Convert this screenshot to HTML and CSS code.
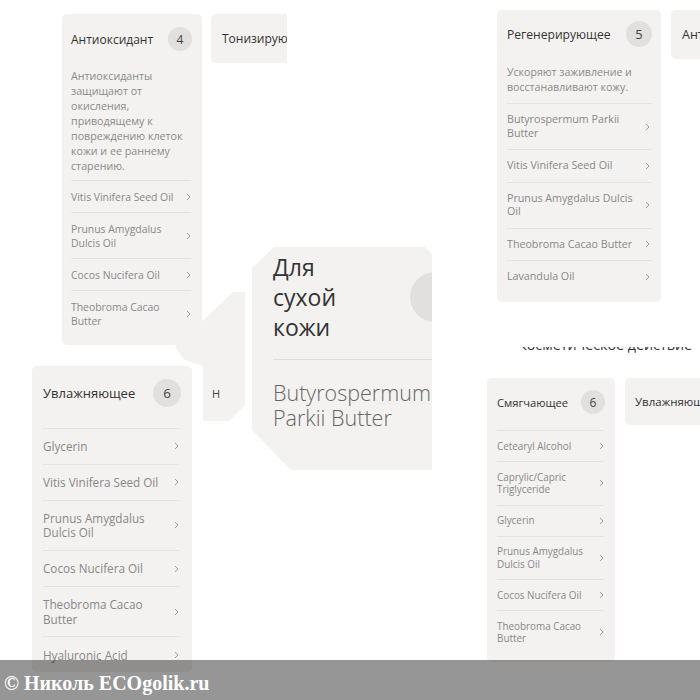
FILE: index.html
```html
<!DOCTYPE html>
<html lang="ru">
<head>
    <meta charset="UTF-8">
    <meta name="viewport" content="width=device-width, initial-scale=1.0">
    <title>Косметическое действие</title>
    <link rel="stylesheet" href="styles.css">
</head>
<body>
    <div class="collage">

        <!-- top left fragment -->
        <section class="piece piece-a">
            <div class="card">
                <div class="card-head">
                    <span class="card-title">Антиоксидант</span>
                    <span class="badge">4</span>
                </div>
                <p class="card-desc">Антиоксиданты<br>защищают от<br>окисления,<br>приводящему к<br>повреждению клеток<br>кожи и ее раннему<br>старению.</p>
                <ul class="list">
                    <li><span>Vitis Vinifera Seed Oil</span><svg viewBox="0 0 5 8"><path d="M1 1l3 3-3 3"/></svg></li>
                    <li><span>Prunus Amygdalus<br>Dulcis Oil</span><svg viewBox="0 0 5 8"><path d="M1 1l3 3-3 3"/></svg></li>
                    <li><span>Cocos Nucifera Oil</span><svg viewBox="0 0 5 8"><path d="M1 1l3 3-3 3"/></svg></li>
                    <li><span>Theobroma Cacao<br>Butter</span><svg viewBox="0 0 5 8"><path d="M1 1l3 3-3 3"/></svg></li>
                </ul>
            </div>
            <div class="tab">Тонизирующее</div>
        </section>

        <!-- top right fragment -->
        <section class="piece piece-b">
            <div class="card">
                <div class="card-head">
                    <span class="card-title">Регенерирующее</span>
                    <span class="badge">5</span>
                </div>
                <p class="card-desc">Ускоряют заживление и<br>восстанавливают кожу.</p>
                <ul class="list">
                    <li><span>Butyrospermum Parkii<br>Butter</span><svg viewBox="0 0 5 8"><path d="M1 1l3 3-3 3"/></svg></li>
                    <li><span>Vitis Vinifera Seed Oil</span><svg viewBox="0 0 5 8"><path d="M1 1l3 3-3 3"/></svg></li>
                    <li><span>Prunus Amygdalus Dulcis<br>Oil</span><svg viewBox="0 0 5 8"><path d="M1 1l3 3-3 3"/></svg></li>
                    <li><span>Theobroma Cacao Butter</span><svg viewBox="0 0 5 8"><path d="M1 1l3 3-3 3"/></svg></li>
                    <li><span>Lavandula Oil</span><svg viewBox="0 0 5 8"><path d="M1 1l3 3-3 3"/></svg></li>
                </ul>
            </div>
            <div class="tab">Антиоксидант</div>
        </section>

        <!-- ghost shape next to the big tile -->
        <div class="ghost">
            <span class="ghost-letter">Н</span>
        </div>

        <!-- bottom left fragment -->
        <section class="piece piece-c">
            <div class="card">
                <div class="card-head">
                    <span class="card-title">Увлажняющее</span>
                    <span class="badge">6</span>
                </div>
                <ul class="list">
                    <li><span>Glycerin</span><svg viewBox="0 0 5 8"><path d="M1 1l3 3-3 3"/></svg></li>
                    <li><span>Vitis Vinifera Seed Oil</span><svg viewBox="0 0 5 8"><path d="M1 1l3 3-3 3"/></svg></li>
                    <li><span>Prunus Amygdalus<br>Dulcis Oil</span><svg viewBox="0 0 5 8"><path d="M1 1l3 3-3 3"/></svg></li>
                    <li><span>Cocos Nucifera Oil</span><svg viewBox="0 0 5 8"><path d="M1 1l3 3-3 3"/></svg></li>
                    <li><span>Theobroma Cacao<br>Butter</span><svg viewBox="0 0 5 8"><path d="M1 1l3 3-3 3"/></svg></li>
                    <li><span>Hyaluronic Acid</span><svg viewBox="0 0 5 8"><path d="M1 1l3 3-3 3"/></svg></li>
                </ul>
            </div>
        </section>

        <!-- bottom right fragment -->
        <section class="piece piece-d">
            <div class="section-title"><h3>Косметическое действие</h3></div>
            <div class="cards">
                <div class="card">
                    <div class="card-head">
                        <span class="card-title">Смягчающее</span>
                        <span class="badge">6</span>
                    </div>
                    <ul class="list">
                        <li><span>Cetearyl Alcohol</span><svg viewBox="0 0 5 8"><path d="M1 1l3 3-3 3"/></svg></li>
                        <li><span>Caprylic/Capric<br>Triglyceride</span><svg viewBox="0 0 5 8"><path d="M1 1l3 3-3 3"/></svg></li>
                        <li><span>Glycerin</span><svg viewBox="0 0 5 8"><path d="M1 1l3 3-3 3"/></svg></li>
                        <li><span>Prunus Amygdalus<br>Dulcis Oil</span><svg viewBox="0 0 5 8"><path d="M1 1l3 3-3 3"/></svg></li>
                        <li><span>Cocos Nucifera Oil</span><svg viewBox="0 0 5 8"><path d="M1 1l3 3-3 3"/></svg></li>
                        <li><span>Theobroma Cacao<br>Butter</span><svg viewBox="0 0 5 8"><path d="M1 1l3 3-3 3"/></svg></li>
                    </ul>
                </div>
                <div class="tab">Увлажняющее</div>
            </div>
        </section>

        <!-- big tile in the middle -->
        <div class="tile">
            <div class="tile-inner">
                <div class="tile-head">
                    <h2>Для<br>сухой<br>кожи</h2>
                    <span class="tile-circle"></span>
                </div>
                <p class="tile-name">Butyrospermum<br>Parkii Butter</p>
            </div>
        </div>

        <div class="watermark">© Николь ECOgolik.ru</div>
    </div>
</body>
</html>
```

FILE: styles.css
```css
* {
    box-sizing: border-box;
}
body {
    margin: 0;
    background-color: #fff;
    font-family: "Open Sans", "Noto Sans", sans-serif;
}
.collage {
    position: relative;
    width: 700px;
    height: 700px;
    overflow: hidden;
    background-color: #fff;
}

/* pieces of the collage */
.piece {
    position: absolute;
    display: flex;
    align-items: flex-start;
    overflow: hidden;
}
.piece-a { left: 62px; top: 14px; width: 225px; height: 340px; gap: 9px; }
.piece-b { left: 497px; top: 10px; width: 203px; height: 300px; gap: 10px; }
.piece-c { left: 32px; top: 366px; width: 160px; height: 334px; }
.piece-d { left: 487px; top: 346px; width: 213px; height: 320px; flex-direction: column; }

.card {
    flex: none;
    background-color: #f3f2f0;
    border-radius: 5px;
}
.card-head {
    display: flex;
    justify-content: space-between;
    align-items: center;
}
.card-title {
    font-weight: 500;
    color: #333;
    white-space: nowrap;
}
.badge {
    display: flex;
    justify-content: center;
    align-items: center;
    border-radius: 50%;
    background-color: #e1e0de;
    color: #444;
}
.card-desc {
    margin: 0;
    color: #8a8a8a;
    border-bottom: 1px solid #e4e3e1;
    white-space: nowrap;
}
.list {
    list-style: none;
    margin: 0;
    padding: 0;
    color: #888;
}
.list li {
    display: flex;
    justify-content: space-between;
    align-items: center;
    border-bottom: 1px solid #e4e3e1;
    white-space: nowrap;
}
.list li:last-child {
    border-bottom: none;
}
.list svg {
    flex: none;
    width: 5px;
    height: 8px;
    fill: none;
    stroke: #9c9c9c;
    stroke-width: 1;
}
.tab {
    flex: none;
    display: flex;
    align-items: center;
    background-color: #f3f2f0;
    border-radius: 5px;
    font-weight: 500;
    color: #333;
    white-space: nowrap;
}

/* top left */
.piece-a .card { width: 140px; padding: 13px 11px 9px 9px; }
.piece-a .card-title { font-size: 12px; }
.piece-a .badge { width: 24px; height: 24px; font-size: 12px; margin-right: -1px; }
.piece-a .card-desc { margin-top: 18px; font-size: 10.7px; line-height: 15px; padding-bottom: 6px; }
.piece-a .list { font-size: 10.4px; line-height: 14px; }
.piece-a .list li { padding: 8.5px 0; }
.piece-a .tab { height: 49px; padding: 0 11px; font-size: 12px; }

/* top right */
.piece-b .card { width: 164px; padding: 11px 9px 9.5px 10px; }
.piece-b .card-title { font-size: 12.1px; }
.piece-b .badge { width: 26px; height: 26px; font-size: 13px; }
.piece-b .card-desc { margin-top: 18px; font-size: 10.6px; line-height: 15px; padding-bottom: 8px; }
.piece-b .list { font-size: 10.7px; line-height: 13.5px; }
.piece-b .list li { padding: 9px 0; }
.piece-b .list svg { margin-right: 2px; }
.piece-b .tab { height: 49px; padding: 0 11px; font-size: 12.5px; }

/* bottom left */
.piece-c .card { width: 160px; padding: 13px 13px 0 11px; }
.piece-c .card-head { padding-bottom: 21px; border-bottom: 1px solid #e4e3e1; }
.piece-c .card-title { font-size: 13px; }
.piece-c .badge { width: 28px; height: 28px; font-size: 13.5px; margin-right: -2px; }
.piece-c .list { font-size: 11.7px; line-height: 14.5px; }
.piece-c .list li { padding: 10.2px 0; }

/* bottom right */
.section-title {
    height: 10px;
    margin-left: 34px;
    margin-top: 1px;
    overflow: hidden;
}
.section-title h3 {
    margin: -9px 0 0 -3px;
    font-size: 14.3px;
    line-height: 14px;
    font-weight: 500;
    color: #333;
    white-space: nowrap;
}
.cards {
    display: flex;
    align-items: flex-start;
    gap: 10px;
    margin-top: 21px;
}
.piece-d .card { width: 128px; padding: 12px 11px 8px 10px; }
.piece-d .card-head { padding-bottom: 16px; border-bottom: 1px solid #e4e3e1; }
.piece-d .card-title { font-size: 11.2px; }
.piece-d .badge { width: 24px; height: 24px; font-size: 12px; margin-right: -1px; }
.piece-d .list { font-size: 9.9px; line-height: 12.5px; }
.piece-d .list li { padding: 8.75px 0; }
.piece-d .tab { height: 47px; padding: 0 10px; font-size: 11.5px; }

/* light shape left of the tile */
.ghost {
    position: absolute;
    left: 175px;
    top: 288px;
    width: 72px;
    height: 135px;
    background-color: #f3f2f0;
    clip-path: polygon(0 59px, 58px 4px, 70px 4px, 70px 117px, 54px 133px, 28px 133px, 28px 78px, 10px 72px);
}
.ghost-letter {
    position: absolute;
    left: 37px;
    top: 98px;
    font-size: 11px;
    font-weight: 500;
    color: #444;
}

/* big tile */
.tile {
    position: absolute;
    left: 252px;
    top: 247px;
    width: 180px;
    height: 223px;
    overflow: hidden;
    background-color: #f3f2f0;
    clip-path: polygon(22px 0, 173px 0, 180px 7px, 180px 223px, 39px 223px, 0 183px, 0 21px);
}
.tile-inner {
    width: 208px;
    padding: 5px 0 0 21px;
}
.tile-head {
    display: flex;
    justify-content: space-between;
    align-items: center;
    padding-bottom: 17px;
    border-bottom: 1px solid #dddcda;
}
.tile-head h2 {
    margin: 0;
    font-size: 23px;
    line-height: 30px;
    font-weight: 500;
    color: #333;
}
.tile-circle {
    width: 50px;
    height: 50px;
    border-radius: 50%;
    background-color: #e1e0de;
}
.tile-name {
    margin: 20px 0 0;
    font-size: 21.5px;
    line-height: 25px;
    font-weight: 300;
    color: #666;
    white-space: nowrap;
}

/* watermark strip */
.watermark {
    position: absolute;
    left: 0;
    bottom: 0;
    width: 100%;
    height: 40px;
    padding: 8px 0 0 4px;
    background-color: rgba(0, 0, 0, 0.41);
    font-family: "Liberation Serif", serif;
    font-size: 20px;
    font-weight: bold;
    line-height: 30px;
    color: #fff;
    white-space: nowrap;
}
```
